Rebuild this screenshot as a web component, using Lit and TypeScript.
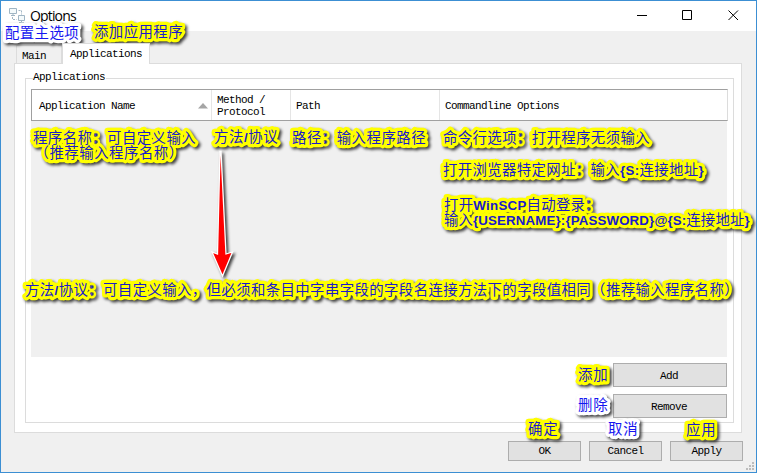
import { LitElement, html, svg, css } from "lit";
import { customElement } from "lit/decorators.js";

interface Note {
  x: number;
  y: number;
  w: number;
  t: string;
  white?: boolean;
}

const NOTES: Note[] = [
  { x: 5, y: 38, w: 73, t: "配置主选项", white: true },
  { x: 94, y: 37, w: 88, t: "添加应用程序" },
  { x: 33, y: 143, w: 162, t: "程序名称：可自定义输入" },
  { x: 34.5, y: 158, w: 148, t: "（推荐输入程序名称）" },
  { x: 214, y: 142, w: 63, t: "方法/协议" },
  { x: 292, y: 143, w: 133, t: "路径：输入程序路径" },
  { x: 443, y: 143, w: 206, t: "命令行选项：打开程序无须输入" },
  { x: 443, y: 175, w: 260, t: "打开浏览器特定网址：输入{S:连接地址}" },
  { x: 444, y: 210, w: 155, t: "打开WinSCP自动登录：" },
  { x: 444, y: 225, w: 305, t: "输入{USERNAME}:{PASSWORD}@{S:连接地址}" },
  { x: 25, y: 295, w: 713, t: "方法/协议：可自定义输入，但必须和条目中字串字段的字段名连接方法下的字段值相同（推荐输入程序名称）" },
  { x: 578, y: 380, w: 29, t: "添加" },
  { x: 578, y: 410, w: 29, t: "删除", white: true },
  { x: 528, y: 434, w: 29, t: "确定" },
  { x: 608, y: 434, w: 29, t: "取消", white: true },
  { x: 686, y: 435, w: 29, t: "应用" },
];

@customElement("note-layer")
class NoteLayer extends LitElement {
  static styles = css`
    :host { position: absolute; inset: 0; pointer-events: none; }
    svg { display: block; }
    text { font: 14.4px "Liberation Sans", "Noto Sans CJK SC", sans-serif; white-space: pre; }
    .latin { font-weight: bold; font-size: 13.3px; }
    .halo { fill: #ff0; stroke: #ff0; stroke-width: 6.5px; stroke-linejoin: round; }
    .halo.white { fill: #fff; stroke: #fff; }
    .ink { fill: #1a1acb; }
    .ink.white { fill: #1616f0; }
    .cast { filter: drop-shadow(2px 2px 1.5px rgba(0, 0, 0, 0.75)); }
    .arrow { fill: #f00; stroke: #fff; stroke-width: 1.3px; }
  `;

  private line(n: Note, kind: string) {
    const parts = n.t.match(/[\x20-\x7e]+|[^\x20-\x7e]+/g) ?? [];
    return svg`<text class="${kind} ${n.white ? "white" : ""}" x=${n.x} y=${n.y} textLength=${n.w}>${parts.map(
      (p) => svg`<tspan class=${/^[\x20-\x7e]/.test(p) ? "latin" : "han"}>${p}</tspan>`
    )}</text>`;
  }

  render() {
    return html`<svg width="757" height="473" viewBox="0 0 757 473">
      <g class="cast">${NOTES.map((n) => this.line(n, "halo"))}</g>
      ${NOTES.map((n) => this.line(n, "ink"))}
      <g class="cast"><path class="arrow" d="M220 151.500 H221 L226 254 L232.500 252 L222.500 276 L212 252 L217.500 254 Z" /></g>
    </svg>`;
  }
}

@customElement("app-root")
class AppRoot extends LitElement {
  static styles = css`
    :host {
      display: flex; flex-direction: column; position: relative; box-sizing: border-box;
      width: 757px; height: 473px; overflow: hidden;
      border: 1px solid #3c8fd3; background: #f0f0f0; color: #000;
      font: 11px/12px "Liberation Mono", monospace; letter-spacing: -0.6px;
    }
    * { box-sizing: border-box; }
    note-layer { margin: -1px; }
    .title { display: flex; height: 30px; background: #fff; flex: none; padding-left: 8px; }
    .logo { margin-top: 6px; }
    .name { font: 14px/29px "Open Sans", sans-serif; letter-spacing: -0.9px; letter-spacing: -0.85px; margin-left: 4px; flex: 1; }
    .tabs { display: flex; align-items: flex-end; height: 32px; padding-left: 15px; flex: none; }
    .tab { height: 18px; width: 46px; border: 1px solid #dcdcdc; border-bottom: 0; padding: 4px 0 0 5px; }
    .tab.on { height: 21px; width: 88px; background: #fff; padding: 4px 0 0 7px; margin-bottom: -1px; z-index: 1; }
    .page { width: 728px; height: 370px; margin-left: 13px; background: #fff; border: 1px solid #dcdcdc; padding: 7px 7px 9px 10px; flex: none; }
    .group { display: flex; flex-direction: column; height: 352px; }
    .legend { display: flex; height: 12px; line-height: 13px; }
    .legend::before, .legend::after { content: ""; border-top: 1px solid #dcdcdc; margin-top: 7px; }
    .legend::before { width: 7px; border-left: 1px solid #dcdcdc; }
    .legend::after { flex: 1; border-right: 1px solid #dcdcdc; margin-left: 1px; }
    .inner { flex: 1; border: 1px solid #dcdcdc; border-top: 0; padding: 6px 5px 0; }
    .head { display: flex; height: 32px; border: 1px solid #a0a0a0; border-right-color: #dcdcdc; }
    .col { display: flex; align-items: center; padding: 1px 0 0 5px; border-right: 1px solid #e5e5e5; line-height: 12px; flex: none; }
    .col:nth-child(1) { width: 180px; padding-left: 7px; justify-content: space-between; padding-right: 3px; }
    .col:nth-child(2) { width: 79px; }
    .col:nth-child(3) { width: 149px; }
    .col:nth-child(4) { flex: 1; border: 0; }
    .list { height: 236px; background: #f0f0f0; margin-right: 1px; }
    .side { display: flex; flex-direction: column; align-items: flex-end; gap: 7px; padding-top: 6px; padding-right: 1px; }
    .btn { display: flex; align-items: center; justify-content: center; width: 73px; height: 20px; background: #e1e1e1; border: 1px solid #adadad; }
    .side .btn { width: 114px; height: 24px; padding: 1px 2px 0 0; }
    .foot { display: flex; justify-content: flex-end; gap: 8px; padding: 8px 13px 0 0; }
    .grip { position: absolute; right: 1px; bottom: 1px; }
  `;

  render() {
    return html`
      <div class="title">
        <svg class="logo" width="17" height="17" viewBox="0 0 17 17" fill="#f4fafc" stroke="#9fb5c4">
          <path d="M.5 1.500h7v5h-7zM9.500 8.500h6v5h-6z" /><path fill="none" d="M2 8.500h4M4 6v2M10 15.500h5M12.500 13v2" />
          <path fill="none" stroke-dasharray="2 1" d="M9.500 3.500h3v4M3.500 10v2.500h4" />
        </svg>
        <div class="name">Options</div>
        <svg width="126" height="30" viewBox="-10 0 126 30" fill="none" stroke="#000">
          <path d="M-3 14.500h10M42.500 9.500h9v9h-9z" /><path d="M88.500 9.500l9.500 9.500M98 9.500l-9.500 9.500" />
        </svg>
      </div>
      <div class="tabs"><div class="tab">Main</div><div class="tab on">Applications</div></div>
      <div class="page">
        <div class="group">
          <div class="legend">Applications</div>
          <div class="inner">
            <div class="head">
              <div class="col">Application Name
                <svg width="10" height="6" viewBox="0 0 10 6"><path fill="#a5a5a5" d="M5 0l5 5.500H0z" /></svg>
              </div>
              <div class="col">Method /<br />Protocol</div>
              <div class="col">Path</div>
              <div class="col">Commandline Options</div>
            </div>
            <div class="list"></div>
            <div class="side"><div class="btn">Add</div><div class="btn">Remove</div></div>
          </div>
        </div>
      </div>
      <div class="foot"><div class="btn">OK</div><div class="btn">Cancel</div><div class="btn">Apply</div></div>
      <svg class="grip" width="9" height="9" viewBox="0 0 9 9" fill="#bcbcbc">
        <path d="M6 0h2v2h-2zM3 3h2v2h-2zM6 3h2v2h-2zM0 6h2v2h-2zM3 6h2v2h-2zM6 6h2v2h-2z" />
      </svg>
      <note-layer></note-layer>
    `;
  }
}
